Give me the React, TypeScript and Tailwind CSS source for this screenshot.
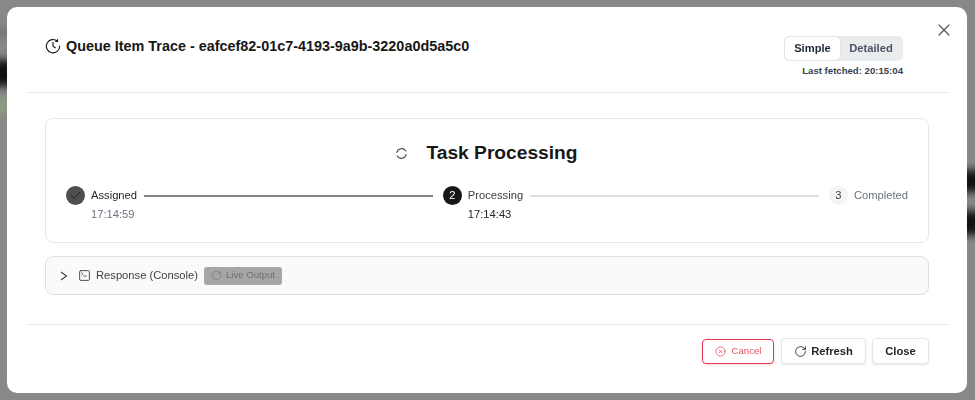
import React from "react";
import { X, Check, SquareTerminal, CircleX, RotateCw } from "lucide-react";

const font = { fontFamily: '"Liberation Sans", Arial, sans-serif' };

function TraceClock() {
  return (
    <svg width="16" height="16" viewBox="0 0 24 24" fill="none" stroke="currentColor" strokeWidth="1.7" strokeLinecap="round" strokeLinejoin="round">
      <path d="M18.6 4.8A10 10 0 1 0 22 12" />
      <path d="M18.8 2.4v2.8h-2.8" />
      <path d="M12 6.5v6l3.5 2" />
    </svg>
  );
}

function RingSpinner({ size, width, className }: { size: number; width: number; className?: string }) {
  return (
    <svg width={size} height={size} viewBox="0 0 24 24" fill="none" stroke="currentColor" strokeWidth={width} strokeLinecap="round" className={className}>
      <path d="M3.5 10A9 9 0 0 1 20 7.5" />
      <path d="M20.5 14A9 9 0 0 1 4 16.5" />
    </svg>
  );
}

function Backdrop() {
  return (
    <div className="absolute inset-0 overflow-hidden bg-[#888888]">
      <div className="absolute left-[-20px] top-[60px] h-[26px] w-[40px] bg-[#111111] blur-[4px]" />
      <div className="absolute left-[-10px] top-[28px] h-[10px] w-[20px] bg-[#777777] blur-[3px]" />
      <div className="absolute left-[-10px] top-[98px] h-[16px] w-[20px] bg-[#8a9a80] blur-[3px]" />
      <div className="absolute right-[-20px] top-[170px] h-[22px] w-[40px] bg-[#111111] blur-[4px]" />
      <div className="absolute right-[-20px] top-[211px] h-[24px] w-[40px] bg-[#111111] blur-[4px]" />
    </div>
  );
}

export default function App() {
  return (
    <div className="relative h-[400px] w-[975px] overflow-hidden p-[7px] pr-[8px] text-[#171717]" style={font}>
      <Backdrop />
      <div className="relative flex h-[386px] w-[960px] flex-col rounded-[10px] bg-white px-[19px]">
        <button className="absolute right-[13px] top-[13px] text-[#4b5563]">
          <X size={20} strokeWidth={1.4} />
        </button>
        <header className="flex h-[86px] shrink-0 items-start justify-between border-b border-[#e9e9eb] pl-[19px] pr-[45px]">
          <div className="mt-[30px] flex items-center gap-[5px]">
            <TraceClock />
            <h2 className="text-[14.4px] font-bold leading-[18px]">Queue Item Trace - eafcef82-01c7-4193-9a9b-3220a0d5a5c0</h2>
          </div>
          <div className="mt-[29px] flex flex-col items-end">
            <div className="flex h-[25px] items-center rounded-[5px] bg-[#e9ecef] p-[1px] opacity-[0.999]">
              <span className="flex h-[23px] w-[55px] items-center justify-center rounded-[4px] bg-white text-[11.2px] font-bold text-[#1f2937] shadow-[0_0_1px_rgba(0,0,0,0.3)]">Simple</span>
              <span className="flex h-[23px] w-[62px] items-center justify-center text-[11.2px] font-bold text-[#4b5563]">Detailed</span>
            </div>
            <p className="mt-[4px] text-[9.6px] font-bold leading-[12px] text-[#374151]">Last fetched: 20:15:04</p>
          </div>
        </header>

        <main className="flex-1 px-[19px] pt-[25px]">
          <section className="h-[125px] rounded-[8px] border border-[#e8e8ec] px-[20px] pt-[22px]">
            <div className="flex h-[24px] items-center justify-center pr-[1px]">
              <RingSpinner size={13} width={2} className="mr-[18px] text-[#404040]" />
              <h3 className="text-[19.2px] font-bold leading-[24px]">Task Processing</h3>
            </div>
            <ol className="mt-[21px] flex items-start opacity-[0.999]">
              <li className="flex shrink-0 items-start">
                <span className="flex h-[19px] w-[19px] items-center justify-center rounded-full bg-[#4f4f4f] text-[#171717]"><Check size={13} strokeWidth={1.4} /></span>
                <div className="ml-[6px]">
                  <p className="text-[11.2px] leading-[18px] text-[#262626]">Assigned</p>
                  <p className="mt-[1px] text-[11.2px] leading-[18px] text-[#6b7280]">17:14:59</p>
                </div>
              </li>
              <div className="ml-[7px] mr-[10px] mt-[9px] h-[2px] flex-1 bg-[#858585]" />
              <li className="flex shrink-0 items-start">
                <span className="flex h-[19px] w-[19px] items-center justify-center rounded-full bg-[#171717] text-[11.2px] text-white">2</span>
                <div className="ml-[6px]">
                  <p className="text-[11.2px] leading-[18px] text-[#404040]">Processing</p>
                  <p className="mt-[1px] text-[11.2px] leading-[18px] text-[#262626]">17:14:43</p>
                </div>
              </li>
              <div className="ml-[7px] mr-[10px] mt-[9px] h-[2px] flex-1 bg-[#dedede]" />
              <li className="flex shrink-0 items-start">
                <span className="flex h-[19px] w-[19px] items-center justify-center rounded-full bg-[#f3f4f6] text-[11.2px] text-[#404040]">3</span>
                <p className="ml-[6px] text-[11.2px] leading-[18px] text-[#6b7280]">Completed</p>
              </li>
            </ol>
          </section>

          <section className="mt-[13px] flex h-[39px] items-center rounded-[8px] border border-[#dfdfe4] bg-[#fafafa] pl-[13px] opacity-[0.999]">
            <svg width="10" height="12" viewBox="0 0 10 12" fill="none" stroke="#404040" strokeWidth="1.1"><path d="M2 2 7.5 6 2 10" /></svg>
            <SquareTerminal size={13} strokeWidth={1.7} className="ml-[9px] text-[#404040]" />
            <span className="ml-[5px] text-[11.2px] text-[#404040]">Response (Console)</span>
            <span className="ml-[6px] flex h-[18px] w-[78px] items-center justify-center gap-[4px] rounded-[3px] bg-[#a6a6a6] text-[9.6px] text-[#6f6f6f]">
              <RotateCw size={11} strokeWidth={2.4} className="text-[#8a8a8a]" />
              Live Output
            </span>
          </section>
        </main>

        <footer className="flex h-[69px] shrink-0 items-start justify-end gap-[6px] border-t border-[#e9e9eb] pr-[19px] pt-[13px] opacity-[0.999]">
          <button className="mr-[1px] mt-[1px] flex h-[25px] w-[72px] items-center justify-center gap-[6px] rounded-[4px] border border-[#e5384f] bg-white text-[9.6px] text-[#e8505f] shadow-[0_1px_3px_rgba(229,56,79,0.2)]">
            <CircleX size={11} strokeWidth={1.5} className="text-[#e5384f]" />
            Cancel
          </button>
          <button className="flex h-[26px] w-[85px] items-center justify-center gap-[4px] rounded-[4px] border border-[#e5e5ea] bg-white text-[11.2px] font-bold text-[#262626] shadow-[0_1px_2px_rgba(0,0,0,0.1)]">
            <RotateCw size={13} strokeWidth={1.6} />
            Refresh
          </button>
          <button className="flex h-[26px] w-[57px] items-center justify-center rounded-[4px] border border-[#e5e5ea] bg-white text-[11.2px] font-bold text-[#262626] shadow-[0_1px_2px_rgba(0,0,0,0.1)]">
            Close
          </button>
        </footer>
      </div>
    </div>
  );
}
